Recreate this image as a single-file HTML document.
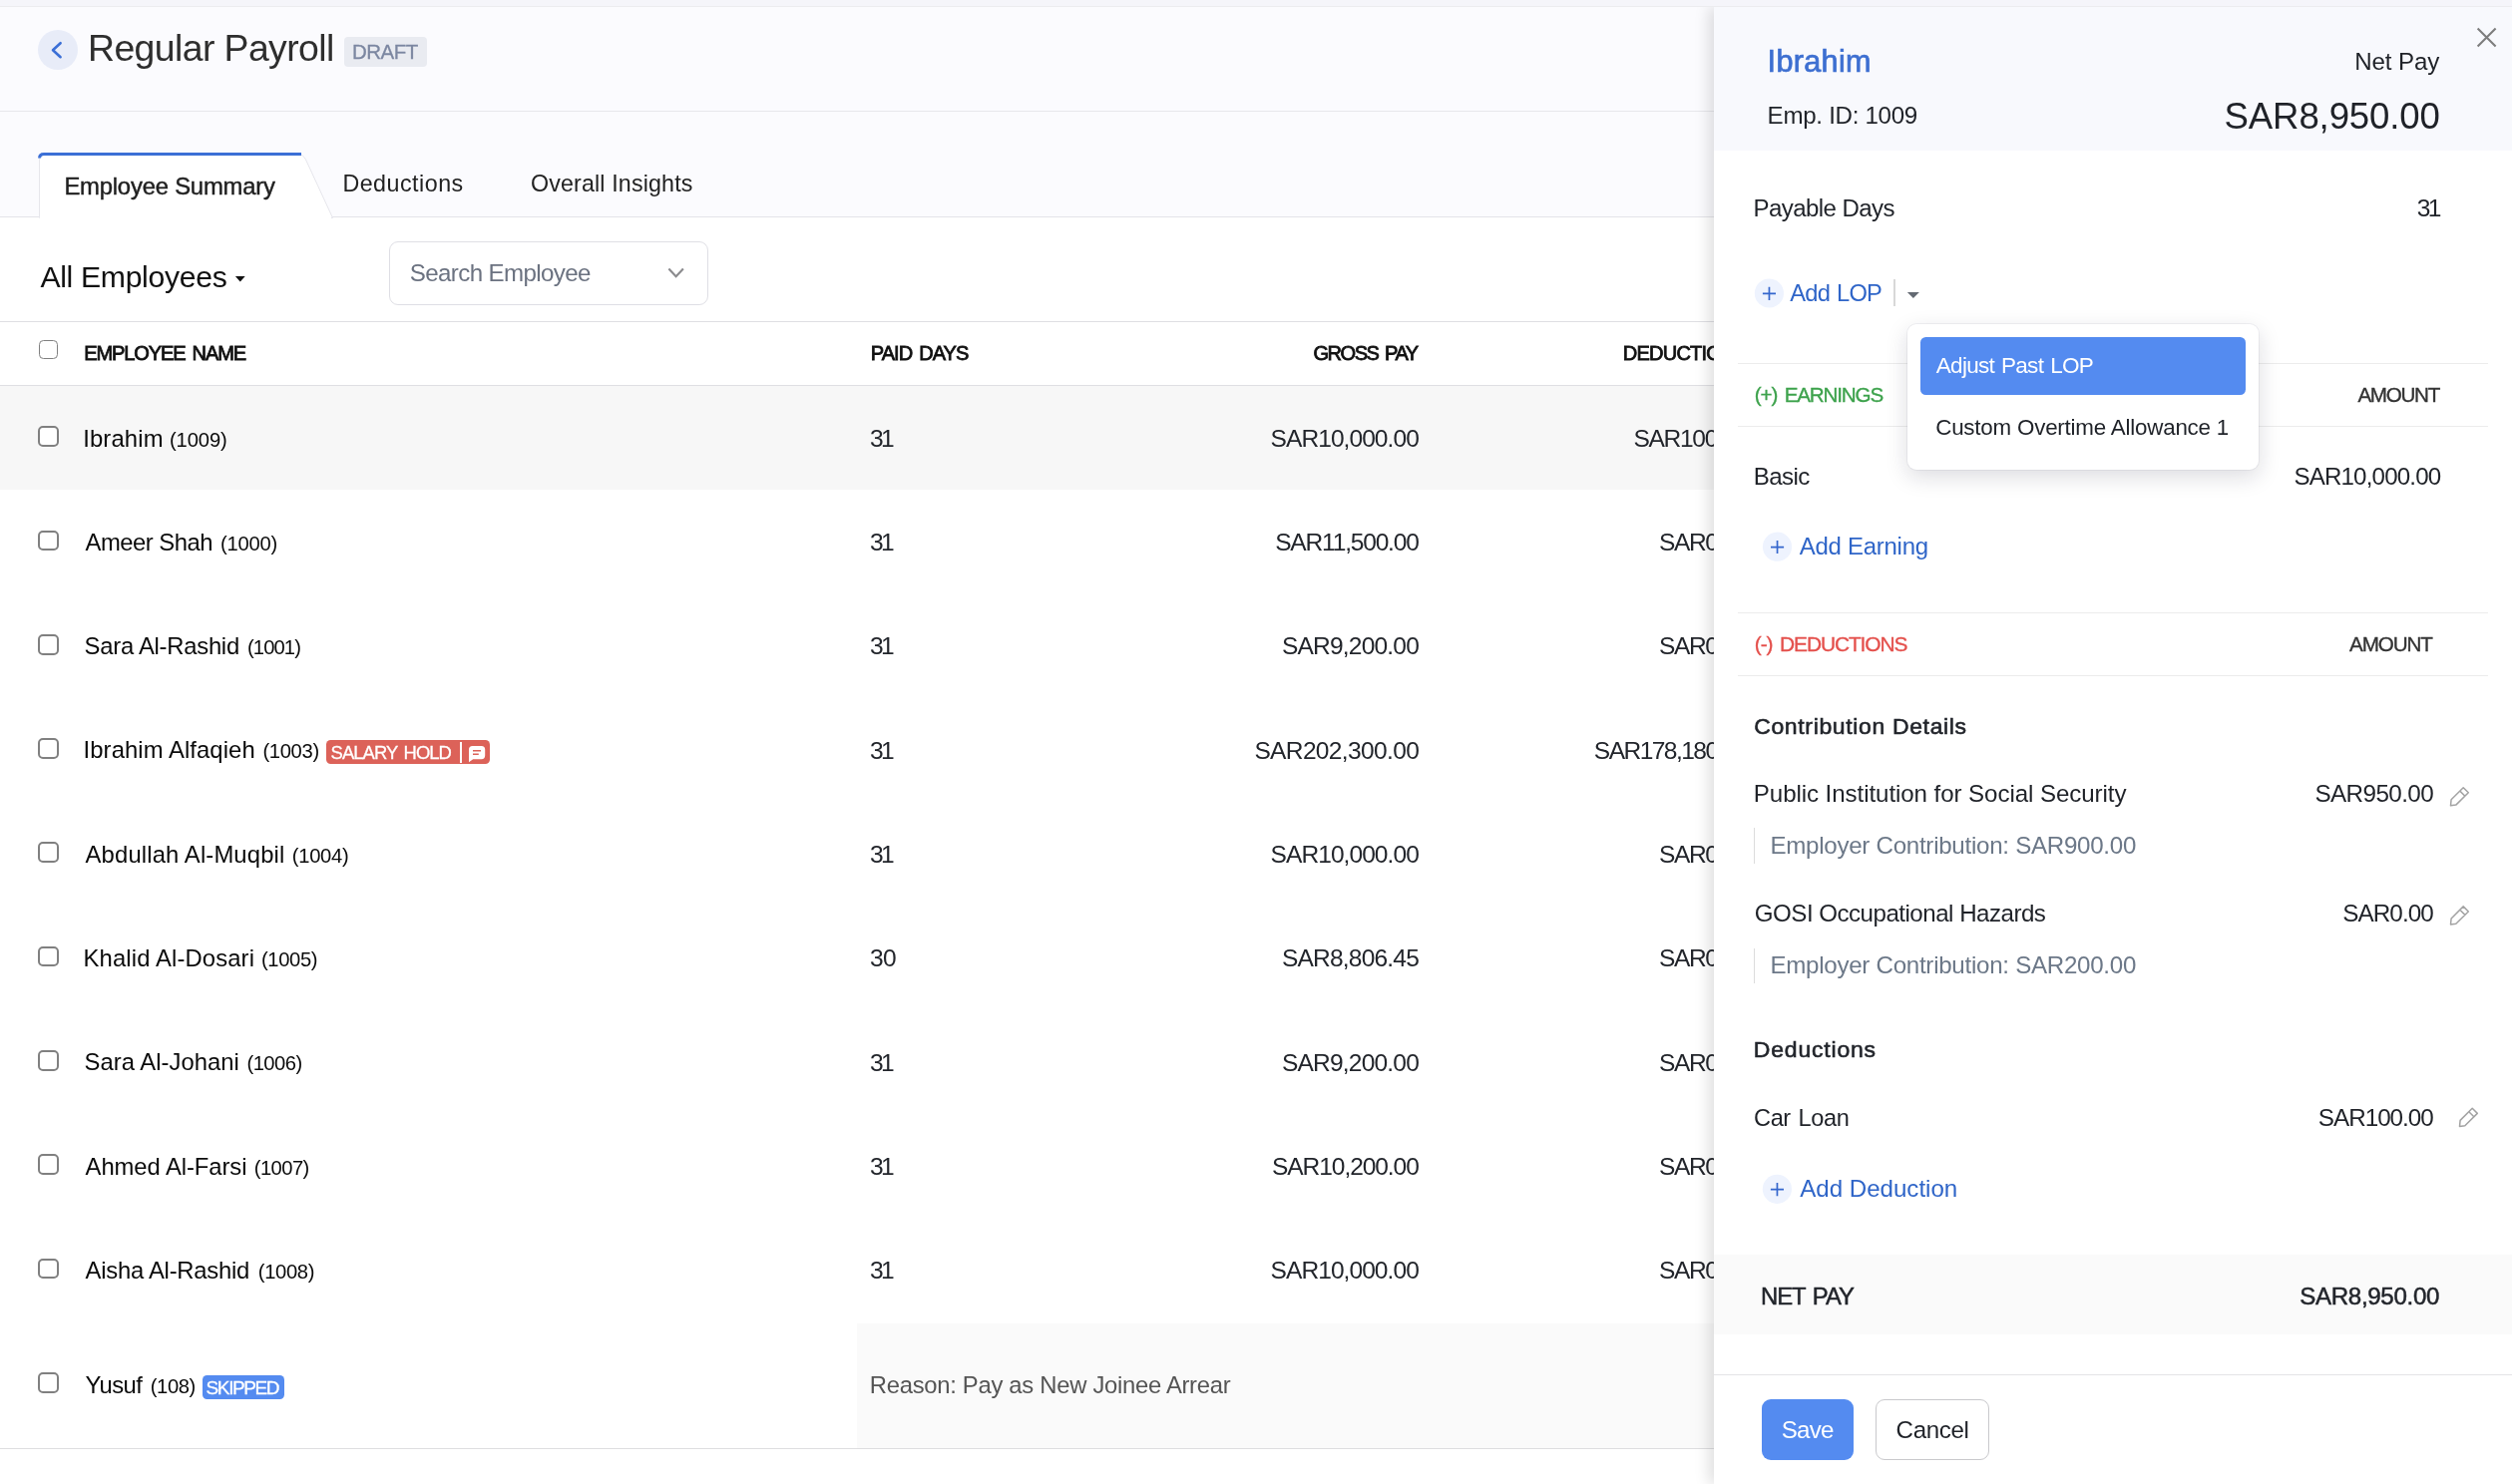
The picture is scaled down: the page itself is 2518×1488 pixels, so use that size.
<!DOCTYPE html>
<html lang="en"><head><meta charset="utf-8"><title>Regular Payroll</title>
<style>
*{box-sizing:border-box;margin:0;padding:0}
html,body{width:2518px;height:1488px;overflow:hidden;background:#fff}
body{position:relative;font-family:"Liberation Sans",sans-serif;color:#1f2228}
#main{position:absolute;left:0;top:0;width:1718px;height:1488px;overflow:hidden;background:#fff}
#panel{position:absolute;left:0;top:0;width:2518px;height:1488px}
.t{position:absolute;line-height:1;white-space:nowrap;display:block}
.a{position:absolute;display:block}
.cb{position:absolute;left:38px;width:20.8px;height:20.8px;border:2px solid #808080;border-radius:5px;background:#fff}
.hl{position:absolute;height:1px;left:1741.5px;width:752.5px;background:#ececec}
.bar{position:absolute;left:1757.6px;width:1.4px;background:#dcdcdc}
.tl{position:absolute;left:0;top:0;width:100%;height:100%;will-change:transform}
</style></head>
<body>
<div id="main">
<div class="a" style="left:0;top:0;width:1718px;height:218px;background:#fbfbfe"></div>
<div class="a" style="left:0;top:111px;width:1718px;height:1px;background:#e7e7ec"></div>
<div class="a" style="left:0;top:217px;width:1718px;height:1px;background:#e4e4e9"></div>
<div class="a" style="left:38px;top:30px;width:40px;height:40px;border-radius:50%;background:#e8ecf8"></div>
<svg class="a" style="left:38px;top:30px" width="40" height="40" viewBox="0 0 40 40"><path d="M22.6 13.2 L15 20.2 L22.6 27.2" fill="none" stroke="#3b6fd6" stroke-width="2.6" stroke-linecap="round" stroke-linejoin="round"/></svg>
<div class="a" style="left:345px;top:37px;width:83px;height:30px;border-radius:4px;background:#e9ebf1"></div>
<svg class="a" style="left:30px;top:145px" width="320" height="80" viewBox="30 145 320 80">
<path d="M39.5 218.5 V159 Q39.5 154.5 44 154.5 H299 Q304 155 306.5 160 L333.5 218.5 Z" fill="#fff" stroke="#e6e6ec" stroke-width="1"/>
<rect x="40" y="217" width="292" height="2" fill="#fff"/>
<path d="M39.6 158.5 Q39.6 154.5 44 154.5 H302" fill="none" stroke="#3b6fd6" stroke-width="3"/>
</svg>
<svg class="a" style="left:235px;top:277px" width="12" height="7" viewBox="0 0 12 7"><g transform="translate(0.5 0.0)"><path d="M0.4 0 H10.2 L5.3 5.4 Z" fill="#111"/></g></svg>
<div class="a" style="left:390.4px;top:242px;width:319.9px;height:63.8px;border:1.3px solid #dfdfe5;border-radius:9px;background:#fff"></div>
<svg class="a" style="left:668px;top:266px" width="20" height="16" viewBox="0 0 20 16"><path d="M2.4 3.5 L9.6 11.3 L16.9 3.5" fill="none" stroke="#8a8a8d" stroke-width="2.1"/></svg>
<div class="a" style="left:0;top:322px;width:1718px;height:1px;background:#dfdfe3"></div>
<div class="a" style="left:0;top:386px;width:1718px;height:1px;background:#dfdfe3"></div>
<div class="a" style="left:0;top:387px;width:1718px;height:104.3px;background:#f7f7f7"></div>
<div class="a" style="left:858.5px;top:1326.6px;width:860px;height:125.4px;background:#fafafa"></div>
<div class="a" style="left:0;top:1452px;width:1718px;height:1px;background:#dedee0"></div>
<div class="cb" style="top:341px;left:39px;width:19px;height:19px;border-width:1.8px;border-radius:4.5px"></div>
<div class="cb" style="top:427.2px"></div>
<div class="cb" style="top:531.5px"></div>
<div class="cb" style="top:635.8px"></div>
<div class="cb" style="top:740.1px"></div>
<div class="cb" style="top:844.4px"></div>
<div class="cb" style="top:948.6px"></div>
<div class="cb" style="top:1052.9px"></div>
<div class="cb" style="top:1157.2px"></div>
<div class="cb" style="top:1261.5px"></div>
<div class="cb" style="top:1376.4px"></div>
<div class="a" style="left:327px;top:742px;width:164px;height:24px;border-radius:4.5px;background:#dc6259"></div>
<div class="a" style="left:461px;top:744px;width:2px;height:21px;background:#fff"></div>
<svg class="a" style="left:469px;top:747px" width="18" height="18" viewBox="0 0 18 18"><g transform="translate(0.6 0.6)"><path d="M4 0.4 H13 Q16.6 0.4 16.6 4 V10 Q16.6 13.6 13 13.6 H4.6 L0.4 16.6 V4 Q0.4 0.4 4 0.4 Z" fill="#fff"/><path d="M4.4 5.2 H12.4 M4.4 8.6 H10.2" stroke="#dc6259" stroke-width="1.5" fill="none"/></g></svg>
<div class="a" style="left:203px;top:1379px;width:82px;height:24px;border-radius:4.5px;background:#548bf0"></div>

<div class="tl">
<span class="t" style="left:88.0px;top:30.3px;font-size:37.4px;color:#2e2e2e;letter-spacing:-0.595px;">Regular Payroll</span>
<span class="t" style="left:353.0px;top:41.7px;font-size:20.49px;color:#7c87a1;-webkit-text-stroke:0.3px #7c87a1;letter-spacing:-0.514px;">DRAFT</span>
<span class="t" style="left:64.4px;top:174.7px;font-size:23.84px;color:#1f1f1f;-webkit-text-stroke:0.45px #1f1f1f;letter-spacing:-0.202px;">Employee Summary</span>
<span class="t" style="left:343.4px;top:172.7px;font-size:23.26px;color:#222;letter-spacing:0.502px;">Deductions</span>
<span class="t" style="left:532.0px;top:172.7px;font-size:23.26px;color:#222;letter-spacing:0.142px;">Overall Insights</span>
<span class="t" style="left:40.4px;top:262.8px;font-size:30.2px;color:#111;letter-spacing:-0.326px;">All Employees</span>
<span class="t" style="left:410.8px;top:261.9px;font-size:24.13px;color:#6b7280;letter-spacing:-0.624px;">Search Employee</span>
<span class="t" style="left:84.2px;top:343.9px;font-size:20.06px;color:#111;word-spacing:2.5px;-webkit-text-stroke:0.8px #111;letter-spacing:-1.114px;">EMPLOYEE NAME</span>
<span class="t" style="left:872.8px;top:343.9px;font-size:20.06px;color:#111;word-spacing:2.5px;-webkit-text-stroke:0.8px #111;letter-spacing:-0.990px;">PAID DAYS</span>
<span class="t" style="left:1316.4px;top:343.9px;font-size:20.06px;color:#111;word-spacing:2.5px;-webkit-text-stroke:0.8px #111;letter-spacing:-1.475px;">GROSS PAY</span>
<span class="t" style="left:1626.8px;top:343.9px;font-size:20.06px;color:#111;-webkit-text-stroke:0.8px #111;letter-spacing:-0.794px;">DEDUCTIONS</span>
<span class="t" style="left:83.2px;top:427.6px;font-size:23.84px;color:#0a0a0a;letter-spacing:0.150px;">Ibrahim</span>
<span class="t" style="left:170.0px;top:430.7px;font-size:20.2px;color:#0a0a0a;letter-spacing:-0.125px;">(1009)</span>
<span class="t" style="left:872.0px;top:427.8px;font-size:24.56px;color:#22252b;letter-spacing:-2.600px;">31</span>
<span class="t" style="left:1273.6px;top:427.8px;font-size:24.56px;color:#22252b;letter-spacing:-0.953px;">SAR10,000.00</span>
<span class="t" style="left:1637.4px;top:427.8px;font-size:24.56px;color:#22252b;letter-spacing:-1.295px;">SAR100.00</span>
<span class="t" style="left:85.6px;top:531.6px;font-size:23.84px;color:#0a0a0a;letter-spacing:-0.508px;">Ameer Shah</span>
<span class="t" style="left:221.0px;top:534.7px;font-size:20.2px;color:#0a0a0a;letter-spacing:-0.251px;">(1000)</span>
<span class="t" style="left:872.0px;top:532.4px;font-size:24.56px;color:#22252b;letter-spacing:-2.600px;">31</span>
<span class="t" style="left:1278.2px;top:532.4px;font-size:24.56px;color:#22252b;letter-spacing:-1.199px;">SAR11,500.00</span>
<span class="t" style="left:1663.0px;top:532.4px;font-size:24.56px;color:#22252b;letter-spacing:-1.430px;">SAR0.00</span>
<span class="t" style="left:84.6px;top:635.9px;font-size:23.84px;color:#0a0a0a;letter-spacing:-0.259px;">Sara Al-Rashid</span>
<span class="t" style="left:248.0px;top:639.0px;font-size:20.2px;color:#0a0a0a;letter-spacing:-0.893px;">(1001)</span>
<span class="t" style="left:872.0px;top:635.6px;font-size:24.56px;color:#22252b;letter-spacing:-2.600px;">31</span>
<span class="t" style="left:1285.0px;top:635.6px;font-size:24.56px;color:#22252b;letter-spacing:-0.820px;">SAR9,200.00</span>
<span class="t" style="left:1663.0px;top:635.6px;font-size:24.56px;color:#22252b;letter-spacing:-1.430px;">SAR0.00</span>
<span class="t" style="left:83.6px;top:740.2px;font-size:23.84px;color:#0a0a0a;letter-spacing:0.078px;">Ibrahim Alfaqieh</span>
<span class="t" style="left:263.4px;top:743.3px;font-size:20.2px;color:#0a0a0a;letter-spacing:-0.325px;">(1003)</span>
<span class="t" style="left:872.0px;top:740.5px;font-size:24.56px;color:#22252b;letter-spacing:-2.600px;">31</span>
<span class="t" style="left:1257.4px;top:740.5px;font-size:24.56px;color:#22252b;letter-spacing:-0.660px;">SAR202,300.00</span>
<span class="t" style="left:1597.8px;top:740.5px;font-size:24.56px;color:#22252b;letter-spacing:-1.542px;">SAR178,180.00</span>
<span class="t" style="left:85.6px;top:844.5px;font-size:23.84px;color:#0a0a0a;letter-spacing:0.135px;">Abdullah Al-Muqbil</span>
<span class="t" style="left:292.8px;top:847.6px;font-size:20.2px;color:#0a0a0a;letter-spacing:-0.293px;">(1004)</span>
<span class="t" style="left:872.0px;top:845.1px;font-size:24.56px;color:#22252b;letter-spacing:-2.600px;">31</span>
<span class="t" style="left:1273.6px;top:845.1px;font-size:24.56px;color:#22252b;letter-spacing:-0.953px;">SAR10,000.00</span>
<span class="t" style="left:1663.0px;top:845.1px;font-size:24.56px;color:#22252b;letter-spacing:-1.430px;">SAR0.00</span>
<span class="t" style="left:83.6px;top:948.8px;font-size:23.84px;color:#0a0a0a;letter-spacing:0.122px;">Khalid Al-Dosari</span>
<span class="t" style="left:262.0px;top:951.8px;font-size:20.2px;color:#0a0a0a;letter-spacing:-0.377px;">(1005)</span>
<span class="t" style="left:872.0px;top:948.5px;font-size:24.56px;color:#22252b;letter-spacing:-0.600px;">30</span>
<span class="t" style="left:1285.0px;top:948.5px;font-size:24.56px;color:#22252b;letter-spacing:-0.820px;">SAR8,806.45</span>
<span class="t" style="left:1663.0px;top:948.5px;font-size:24.56px;color:#22252b;letter-spacing:-1.430px;">SAR0.00</span>
<span class="t" style="left:84.6px;top:1053.1px;font-size:23.84px;color:#0a0a0a;letter-spacing:0.025px;">Sara Al-Johani</span>
<span class="t" style="left:247.4px;top:1056.1px;font-size:20.2px;color:#0a0a0a;letter-spacing:-0.483px;">(1006)</span>
<span class="t" style="left:872.0px;top:1053.8px;font-size:24.56px;color:#22252b;letter-spacing:-2.600px;">31</span>
<span class="t" style="left:1285.0px;top:1053.8px;font-size:24.56px;color:#22252b;letter-spacing:-0.820px;">SAR9,200.00</span>
<span class="t" style="left:1663.0px;top:1053.8px;font-size:24.56px;color:#22252b;letter-spacing:-1.430px;">SAR0.00</span>
<span class="t" style="left:85.6px;top:1157.9px;font-size:23.84px;color:#0a0a0a;letter-spacing:-0.078px;">Ahmed Al-Farsi</span>
<span class="t" style="left:254.8px;top:1161.0px;font-size:20.2px;color:#0a0a0a;letter-spacing:-0.577px;">(1007)</span>
<span class="t" style="left:872.0px;top:1157.9px;font-size:24.56px;color:#22252b;letter-spacing:-2.600px;">31</span>
<span class="t" style="left:1275.0px;top:1157.9px;font-size:24.56px;color:#22252b;letter-spacing:-1.078px;">SAR10,200.00</span>
<span class="t" style="left:1663.0px;top:1157.9px;font-size:24.56px;color:#22252b;letter-spacing:-1.430px;">SAR0.00</span>
<span class="t" style="left:85.6px;top:1261.6px;font-size:23.84px;color:#0a0a0a;letter-spacing:-0.254px;">Aisha Al-Rashid</span>
<span class="t" style="left:258.8px;top:1264.7px;font-size:20.2px;color:#0a0a0a;letter-spacing:-0.335px;">(1008)</span>
<span class="t" style="left:872.0px;top:1262.4px;font-size:24.56px;color:#22252b;letter-spacing:-2.600px;">31</span>
<span class="t" style="left:1273.6px;top:1262.4px;font-size:24.56px;color:#22252b;letter-spacing:-0.953px;">SAR10,000.00</span>
<span class="t" style="left:1663.0px;top:1262.4px;font-size:24.56px;color:#22252b;letter-spacing:-1.430px;">SAR0.00</span>
<span class="t" style="left:85.4px;top:1376.5px;font-size:23.84px;color:#0a0a0a;letter-spacing:-0.504px;">Yusuf</span>
<span class="t" style="left:150.8px;top:1379.6px;font-size:20.2px;color:#0a0a0a;letter-spacing:-0.417px;">(108)</span>
<span class="t" style="left:206.6px;top:1381.9px;font-size:19.04px;color:#fff;-webkit-text-stroke:0.3px #fff;letter-spacing:-1.413px;">SKIPPED</span>
<span class="t" style="left:871.8px;top:1376.8px;font-size:23.84px;color:#555;letter-spacing:-0.291px;">Reason: Pay as New Joinee Arrear</span>
<span class="t" style="left:331.6px;top:746.0px;font-size:18.46px;color:#fff;word-spacing:2.5px;-webkit-text-stroke:0.3px #fff;letter-spacing:-0.966px;">SALARY HOLD</span>
</div>
</div>
<div id="panel">
<div class="a" style="left:1718px;top:7px;width:800px;height:1481px;background:#fff;box-shadow:-5px 0 14px rgba(0,0,0,.13)"></div>
<div class="a" style="left:1718px;top:7px;width:800px;height:143.5px;background:#f8f9fd"></div>
<svg class="a" style="left:2480px;top:26px" width="24" height="24" viewBox="0 0 24 24"><path d="M3.6 2.5 L21.6 20.5 M21.6 2.5 L3.6 20.5" fill="none" stroke="#7d7d7d" stroke-width="2.1"/></svg>
<svg class="a" style="left:1758px;top:279px" width="31" height="31" viewBox="0 0 31 31"><g transform="translate(0.4 0.0)"><circle cx="15" cy="15" r="14.6" fill="#eef3fe"/><path d="M8.5 15.4 H21.6 M15.05 8.8 V21.9" stroke="#3567cd" stroke-width="1.7" fill="none"/></g></svg>
<div class="a" style="left:1898px;top:280px;width:2px;height:27.2px;background:#d8d8d8"></div>
<svg class="a" style="left:1911px;top:292px" width="14" height="8" viewBox="0 0 14 8"><g transform="translate(0.6 0.8)"><path d="M0.3 0.2 H12.3 L6.3 6.2 Z" fill="#646a73"/></g></svg>
<div class="hl" style="top:364px"></div>
<div class="hl" style="top:427px"></div>
<div class="hl" style="top:614px"></div>
<div class="hl" style="top:677px"></div>
<svg class="a" style="left:1766px;top:533px" width="31" height="31" viewBox="0 0 31 31"><g transform="translate(0.5 0.2)"><circle cx="15" cy="15" r="14.6" fill="#eef3fe"/><path d="M8.5 15.4 H21.6 M15.05 8.8 V21.9" stroke="#3567cd" stroke-width="1.7" fill="none"/></g></svg>
<svg class="a" style="left:1766px;top:1177px" width="31" height="31" viewBox="0 0 31 31"><g transform="translate(0.4 0.3)"><circle cx="15" cy="15" r="14.6" fill="#eef3fe"/><path d="M8.5 15.4 H21.6 M15.05 8.8 V21.9" stroke="#3567cd" stroke-width="1.7" fill="none"/></g></svg>
<div class="bar" style="top:830px;height:35.5px"></div>
<div class="bar" style="top:950.5px;height:35px"></div>
<svg class="a" style="left:2455px;top:788px" width="21" height="21" viewBox="0 0 21 21"><g transform="translate(0.6 0.8)"><path d="M13.6 0.9 L18.7 6 L6.2 18.3 L0.9 19 L1.5 13 Z M10.2 4.3 L15.3 9.4" fill="none" stroke="#a3a3a3" stroke-width="1.5" stroke-linejoin="round"/></g></svg>
<svg class="a" style="left:2455px;top:908px" width="21" height="21" viewBox="0 0 21 21"><g transform="translate(0.6 0.0)"><path d="M13.6 0.9 L18.7 6 L6.2 18.3 L0.9 19 L1.5 13 Z M10.2 4.3 L15.3 9.4" fill="none" stroke="#a3a3a3" stroke-width="1.5" stroke-linejoin="round"/></g></svg>
<svg class="a" style="left:2464px;top:1110px" width="21" height="21" viewBox="0 0 21 21"><g transform="translate(0.6 0.4)"><path d="M13.6 0.9 L18.7 6 L6.2 18.3 L0.9 19 L1.5 13 Z M10.2 4.3 L15.3 9.4" fill="none" stroke="#a3a3a3" stroke-width="1.5" stroke-linejoin="round"/></g></svg>
<div class="a" style="left:1718px;top:1258px;width:800px;height:79.7px;background:#fafafa"></div>
<div class="a" style="left:1718px;top:1378px;width:800px;height:1px;background:#e4e4e6"></div>
<div class="a" style="left:1766px;top:1403px;width:92.2px;height:61px;border-radius:9px;background:#548bf0"></div>
<div class="a" style="left:1880.2px;top:1403px;width:113.9px;height:61px;border-radius:9px;background:#fff;border:1.3px solid #c9c9cc"></div>
<div class="a" style="left:1912px;top:324.6px;width:352.2px;height:146.2px;border-radius:9px;background:#fff;box-shadow:0 7px 22px rgba(20,20,45,.15),0 0 0 1px rgba(20,20,60,.05)"></div>
<div class="a" style="left:1925px;top:337.9px;width:326px;height:57.8px;border-radius:5.5px;background:#548bf0"></div>
<div class="a" style="left:0;top:0;width:2518px;height:6px;background:#f5f5fa"></div>
<div class="a" style="left:0;top:6px;width:2518px;height:1px;background:#ececef"></div>

<div class="tl">
<span class="t" style="left:1771.6px;top:46.0px;font-size:30.6px;color:#3d6fd1;-webkit-text-stroke:0.7px #3d6fd1;letter-spacing:0.321px;">Ibrahim</span>
<span class="t" style="left:1771.6px;top:103.9px;font-size:24.13px;color:#1f2228;letter-spacing:-0.293px;">Emp. ID: 1009</span>
<span class="t" style="left:2360.2px;top:49.6px;font-size:24.13px;color:#1f2228;letter-spacing:-0.128px;">Net Pay</span>
<span class="t" style="left:2229.6px;top:98.8px;font-size:36.6px;color:#1f2228;letter-spacing:-0.134px;">SAR8,950.00</span>
<span class="t" style="left:1757.6px;top:197.1px;font-size:24.06px;color:#1f2228;letter-spacing:-0.584px;">Payable Days</span>
<span class="t" style="left:2422.8px;top:196.7px;font-size:24.56px;color:#1f2228;letter-spacing:-2.600px;">31</span>
<span class="t" style="left:1794.2px;top:282.5px;font-size:23.69px;color:#2f65c8;word-spacing:1px;letter-spacing:-0.739px;">Add LOP</span>
<span class="t" style="left:1940.8px;top:356.3px;font-size:22.53px;color:#fff;word-spacing:1.5px;letter-spacing:-0.729px;">Adjust Past LOP</span>
<span class="t" style="left:1940.2px;top:418.0px;font-size:22.38px;color:#1f2228;letter-spacing:-0.216px;">Custom Overtime Allowance 1</span>
<span class="t" style="left:1758.8px;top:385.7px;font-size:20.64px;color:#3da24c;word-spacing:3px;-webkit-text-stroke:0.35px #3da24c;letter-spacing:-1.164px;">(+) EARNINGS</span>
<span class="t" style="left:2363.4px;top:385.7px;font-size:20.64px;color:#333;-webkit-text-stroke:0.35px #333;letter-spacing:-1.304px;">AMOUNT</span>
<span class="t" style="left:1757.8px;top:465.6px;font-size:24.13px;color:#1f2228;letter-spacing:-0.603px;">Basic</span>
<span class="t" style="left:2299.4px;top:465.6px;font-size:24.13px;color:#1f2228;letter-spacing:-0.831px;">SAR10,000.00</span>
<span class="t" style="left:1803.8px;top:535.6px;font-size:23.98px;color:#2f65c8;letter-spacing:-0.266px;">Add Earning</span>
<span class="t" style="left:1758.8px;top:635.7px;font-size:20.93px;color:#e4504c;word-spacing:3px;-webkit-text-stroke:0.35px #e4504c;letter-spacing:-1.106px;">(-) DEDUCTIONS</span>
<span class="t" style="left:2355.0px;top:636.1px;font-size:20.64px;color:#333;-webkit-text-stroke:0.35px #333;letter-spacing:-1.082px;">AMOUNT</span>
<span class="t" style="left:1758.2px;top:716.8px;font-size:22.97px;color:#22252b;-webkit-text-stroke:0.6px #22252b;letter-spacing:0.656px;">Contribution Details</span>
<span class="t" style="left:1757.8px;top:783.8px;font-size:24.13px;color:#1f2228;letter-spacing:-0.085px;">Public Institution for Social Security</span>
<span class="t" style="left:2320.4px;top:783.6px;font-size:24.27px;color:#1f2228;letter-spacing:-0.592px;">SAR950.00</span>
<span class="t" style="left:1774.4px;top:835.6px;font-size:24.13px;color:#6c7888;letter-spacing:-0.275px;">Employer Contribution: SAR900.00</span>
<span class="t" style="left:1758.8px;top:903.8px;font-size:24.13px;color:#1f2228;letter-spacing:-0.512px;">GOSI Occupational Hazards</span>
<span class="t" style="left:2348.2px;top:903.8px;font-size:24.27px;color:#1f2228;letter-spacing:-0.921px;">SAR0.00</span>
<span class="t" style="left:1774.4px;top:955.8px;font-size:24.13px;color:#6c7888;letter-spacing:-0.275px;">Employer Contribution: SAR200.00</span>
<span class="t" style="left:1757.8px;top:1041.0px;font-size:22.97px;color:#22252b;-webkit-text-stroke:0.6px #22252b;letter-spacing:0.822px;">Deductions</span>
<span class="t" style="left:1758.0px;top:1110.1px;font-size:23.55px;color:#1f2228;word-spacing:1.5px;letter-spacing:-0.374px;">Car Loan</span>
<span class="t" style="left:2323.8px;top:1108.5px;font-size:24.27px;color:#1f2228;letter-spacing:-1.013px;">SAR100.00</span>
<span class="t" style="left:1804.2px;top:1179.6px;font-size:24.13px;color:#2f65c8;letter-spacing:-0.015px;">Add Deduction</span>
<span class="t" style="left:1765.0px;top:1287.9px;font-size:23.84px;color:#22252b;word-spacing:2px;-webkit-text-stroke:0.5px #22252b;letter-spacing:-1.010px;">NET PAY</span>
<span class="t" style="left:2305.2px;top:1287.7px;font-size:24.13px;color:#22252b;-webkit-text-stroke:0.5px #22252b;letter-spacing:-0.330px;">SAR8,950.00</span>
<span class="t" style="left:1785.8px;top:1421.6px;font-size:24.13px;color:#fff;letter-spacing:-0.804px;">Save</span>
<span class="t" style="left:1900.6px;top:1421.6px;font-size:24.13px;color:#1f2228;letter-spacing:-0.378px;">Cancel</span>
</div>
</div>
</body></html>
